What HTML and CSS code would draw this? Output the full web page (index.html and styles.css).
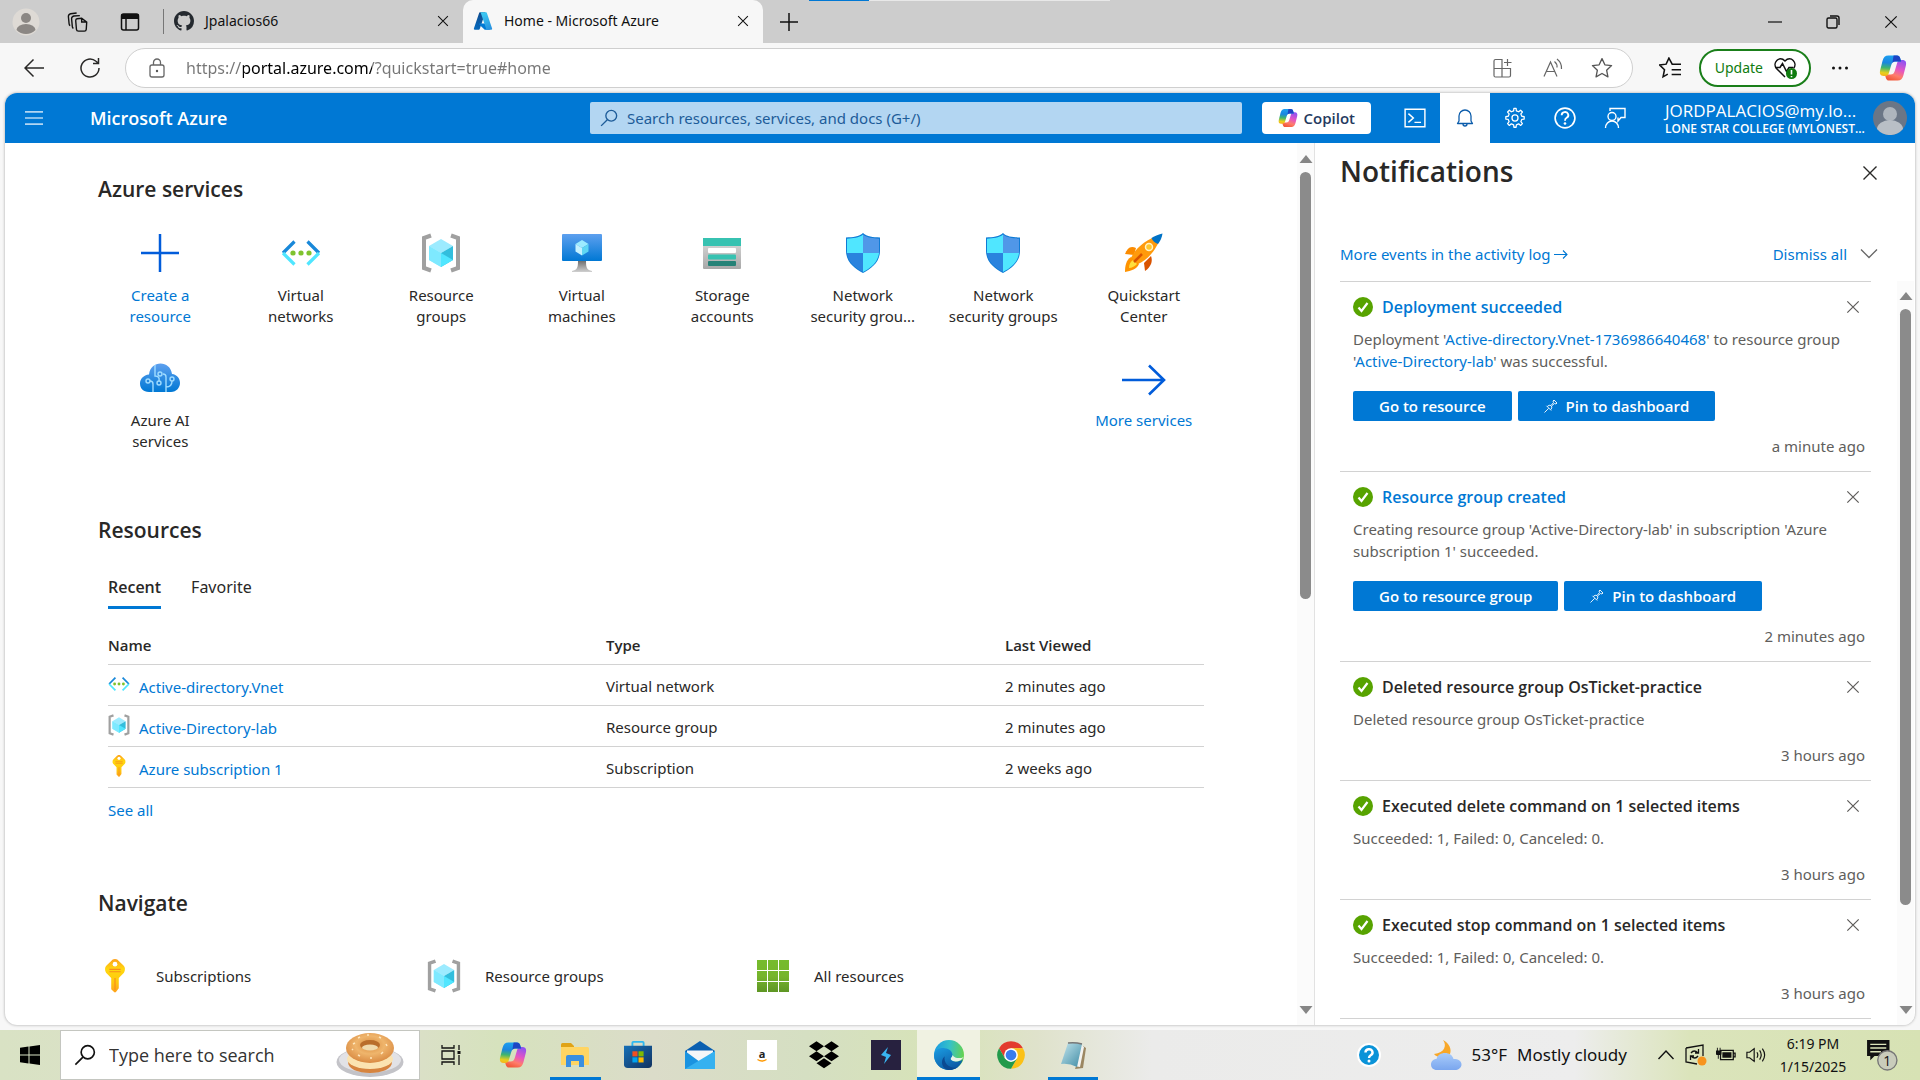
FILE: index.html
```html
<!DOCTYPE html>
<html lang="en">
<head>
<meta charset="utf-8">
<title>Home - Microsoft Azure</title>
<link rel="stylesheet" href="styles.css">
</head>
<body>
<svg class="sprite" aria-hidden="true">
  <defs>
    <linearGradient id="g-blue" x1="0" y1="0" x2="0" y2="1"><stop offset="0" stop-color="#5ea0ef"/><stop offset="1" stop-color="#0078d4"/></linearGradient>
    <linearGradient id="g-stand" x1="0" y1="0" x2="0" y2="1"><stop offset="0" stop-color="#707070"/><stop offset="1" stop-color="#d0d0d0"/></linearGradient>
    <linearGradient id="g-box" x1="0" y1="0" x2="0" y2="1"><stop offset="0" stop-color="#dcdcdc"/><stop offset="1" stop-color="#a8a8a8"/></linearGradient>
    <linearGradient id="g-key" x1="0" y1="0" x2="0" y2="1"><stop offset="0" stop-color="#fea11b"/><stop offset=".3" stop-color="#ffd70f"/><stop offset=".7" stop-color="#ffc80f"/><stop offset="1" stop-color="#fea11b"/></linearGradient>
    <linearGradient id="g-green" gradientUnits="userSpaceOnUse" x1="0" y1="0" x2="0" y2="32"><stop offset="0" stop-color="#76bc2d"/><stop offset=".5" stop-color="#76b52d"/><stop offset="1" stop-color="#5e9624"/></linearGradient>
    <linearGradient id="g-copa" x1=".3" y1="0" x2=".2" y2="1"><stop offset="0" stop-color="#1c9ff0"/><stop offset=".35" stop-color="#1a86e0"/><stop offset=".6" stop-color="#3fb56f"/><stop offset=".85" stop-color="#e8cf1e"/><stop offset="1" stop-color="#f7b21b"/></linearGradient>
    <linearGradient id="g-copb" x1=".2" y1="1" x2=".6" y2="0"><stop offset="0" stop-color="#8b52f4"/><stop offset=".45" stop-color="#e455c4"/><stop offset=".75" stop-color="#ff7d6b"/><stop offset="1" stop-color="#f25a3c"/></linearGradient>
    <linearGradient id="g-azl" x1=".7" y1="0" x2=".3" y2="1"><stop offset="0" stop-color="#114a8b"/><stop offset="1" stop-color="#0669bc"/></linearGradient>
    <linearGradient id="g-azr" x1=".3" y1="0" x2=".7" y2="1"><stop offset="0" stop-color="#3ccbf4"/><stop offset="1" stop-color="#2892df"/></linearGradient>
    <linearGradient id="g-edge" x1="0" y1=".4" x2="1" y2=".5"><stop offset="0" stop-color="#1b9de2"/><stop offset=".5" stop-color="#35c1c8"/><stop offset="1" stop-color="#66d34c"/></linearGradient>
    <linearGradient id="g-edgeb" x1="0" y1="0" x2=".6" y2="1"><stop offset="0" stop-color="#1b9de2"/><stop offset="1" stop-color="#0c59a4"/></linearGradient>
    <linearGradient id="g-cloud" x1="0" y1="0" x2="0" y2="1"><stop offset="0" stop-color="#a9ccfb"/><stop offset="1" stop-color="#7aa6ee"/></linearGradient>
    <linearGradient id="g-store" x1="0" y1="0" x2="1" y2="1"><stop offset="0" stop-color="#1670b8"/><stop offset="1" stop-color="#12325f"/></linearGradient>
    <linearGradient id="g-note" x1="0" y1="0" x2="1" y2="1"><stop offset="0" stop-color="#c5e6ee"/><stop offset="1" stop-color="#3f8ca5"/></linearGradient>
    <radialGradient id="g-bagel" cx=".5" cy=".4" r=".6"><stop offset="0" stop-color="#d98b3e"/><stop offset=".5" stop-color="#efb56c"/><stop offset="1" stop-color="#d98a42"/></radialGradient>
  </defs>

  <symbol id="i-x" viewBox="0 0 16 16"><path d="M1.500 1.500 14.500 14.500M14.500 1.500 1.500 14.500" fill="none" stroke="currentColor" stroke-width="1.400"/></symbol>
  <symbol id="i-person" viewBox="0 0 28 28"><circle cx="14" cy="14" r="13.500" fill="#dedad5"/><circle cx="14" cy="10" r="5" fill="#8b8784"/><path d="M4.500 22a9.500 6 0 0 1 19 0 13.500 13.500 0 0 1-19 0z" fill="#8b8784"/></symbol>
  <symbol id="i-spaces" viewBox="0 0 24 24"><g fill="none" stroke="currentColor" stroke-width="1.500"><path d="M11 8.500 16 8l5.500 4-.5 8q-.2 2-2 2h-6.500q-2 0-2.200-2L9.500 10.500q0-1.800 1.500-2zM16 8v4h5.500"/><path d="M7 19q-1-.5-1.200-2L5 8.500Q5 6 7.500 5.500L14 5M3.500 16q-1-.5-1.200-2L1.500 6Q1.500 3.500 4 3l6.500-.8"/></g></symbol>
  <symbol id="i-vtabs" viewBox="0 0 20 20"><rect x="1.500" y="2" width="17" height="16" rx="2" fill="none" stroke="currentColor" stroke-width="1.500"/><path d="M1.500 2h17v5h-17z" fill="currentColor"/><path d="M6 7v11" stroke="currentColor" stroke-width="1.500"/></symbol>
  <symbol id="i-github" viewBox="0 0 16 16"><path fill="#24292f" d="M8 0C3.580 0 0 3.580 0 8c0 3.540 2.290 6.530 5.470 7.590.4.070.55-.17.55-.38 0-.19-.01-.82-.01-1.490-2.010.37-2.530-.49-2.690-.94-.09-.23-.48-.94-.82-1.130-.28-.15-.68-.52-.01-.53.63-.01 1.080.58 1.230.82.72 1.210 1.870.87 2.330.66.07-.52.28-.87.51-1.070-1.780-.2-3.640-.89-3.640-3.950 0-.87.31-1.590.82-2.150-.08-.2-.36-1.020.08-2.120 0 0 .67-.21 2.200.82.64-.18 1.320-.27 2-.27s1.360.09 2 .27c1.530-1.040 2.200-.82 2.200-.82.44 1.100.16 1.920.08 2.120.51.56.82 1.270.82 2.150 0 3.070-1.870 3.750-3.650 3.950.29.25.54.73.54 1.480 0 1.070-.01 1.930-.01 2.200 0 .21.15.46.55.38A8.010 8.010 0 0 0 16 8c0-4.420-3.580-8-8-8z"/></symbol>
  <symbol id="i-azure" viewBox="0 0 96 96"><path fill="url(#g-azl)" d="M33.338 6.544h26.038l-27.030 80.087a4.152 4.152 0 0 1-3.933 2.824H8.149a4.145 4.145 0 0 1-3.928-5.470L29.404 9.368a4.152 4.152 0 0 1 3.934-2.825z"/><path fill="#0078d4" d="M71.175 60.261h-41.290a1.911 1.911 0 0 0-1.305 3.309l26.532 24.764a4.171 4.171 0 0 0 2.846 1.121h23.380z"/><path fill="url(#g-azr)" d="M66.595 9.364a4.145 4.145 0 0 0-3.928-2.820H33.648a4.146 4.146 0 0 1 3.928 2.820l25.184 74.620a4.146 4.146 0 0 1-3.928 5.472h29.020a4.146 4.146 0 0 0 3.927-5.472z"/></symbol>
  <symbol id="i-plus" viewBox="0 0 18 18"><path d="M9 0v18M0 9h18" stroke="currentColor" stroke-width="1.500"/></symbol>
  <symbol id="i-min" viewBox="0 0 14 14"><path d="M0 7h14" stroke="currentColor" stroke-width="1.200"/></symbol>
  <symbol id="i-restore" viewBox="0 0 14 14"><g fill="none" stroke="currentColor" stroke-width="1.400"><rect x="1" y="3" width="10" height="10" rx="1.500"/><path d="M4 1h7q2 0 2 2v7"/></g></symbol>
  <symbol id="i-back" viewBox="0 0 20 20"><path d="M20 10H1M9.500 1.500 1 10l8.500 8.500" fill="none" stroke="currentColor" stroke-width="1.500"/></symbol>
  <symbol id="i-refresh" viewBox="0 0 20 20"><path d="M19 10a9 9 0 1 1-3-6.700L18 5M18.500 0v5.500H13" fill="none" stroke="currentColor" stroke-width="1.500"/></symbol>
  <symbol id="i-lock" viewBox="0 0 20 20"><g fill="none" stroke="#666" stroke-width="1.300"><rect x="3" y="7" width="14" height="12" rx="2"/><path d="M6.500 7V4.500a3.500 3.500 0 0 1 7 0V7"/></g><circle cx="10" cy="13" r="1.200" fill="#555"/></symbol>
  <symbol id="i-apps" viewBox="0 0 20 20"><path d="M1 3q0-1.500 1.500-1.500H9V19H2.500Q1 19 1 17.500zM1 10.500h16.500V17.500q0 1.500-1.500 1.500H9M14.500 1v7M11 4.500h7.500" fill="none" stroke="#666" stroke-width="1.200"/></symbol>
  <symbol id="i-read" viewBox="0 0 20 20"><path d="M1 18.500 7.500 4 14 18.500M3.500 13.500h8M11.500 3.500q3 2.500 2.500 6M14 1q5 4 4.500 10" fill="none" stroke="#666" stroke-width="1.200"/></symbol>
  <symbol id="i-star" viewBox="0 0 20 20"><path d="m10 1.500 2.600 5.600 6.100.7-4.500 4.200 1.200 6.100L10 15l-5.400 3.100 1.200-6.100L1.300 7.800l6.100-.7z" fill="none" stroke="#555" stroke-width="1.200" stroke-linejoin="round"/></symbol>
  <symbol id="i-favs" viewBox="0 0 20 20"><path d="M13 6.500h-1L9 1 6.500 6.500l-6 .7 4.500 4.300-1.300 6.500L8 15.500M12.500 6.500H20M11.500 11.500H20M11.500 16H20" fill="none" stroke="#111" stroke-width="1.400"/></symbol>
  <symbol id="i-heart" viewBox="0 0 24 24"><path d="M12 21 3.500 12.500C-1 7 6-1 12 5c6-6 13 2 8.500 7.500M2 11.500h5l2.500-4 4 8 2.500-4h4" fill="none" stroke="#111" stroke-width="1.500"/><circle cx="18.500" cy="17.500" r="5.500" fill="#107c10"/><path d="M18.500 14v4.500M18.500 20v1.200" stroke="#fff" stroke-width="1.600"/></symbol>
  <symbol id="i-dots" viewBox="0 0 18 18"><g fill="#111"><circle cx="2.500" cy="9" r="1.500"/><circle cx="9" cy="9" r="1.500"/><circle cx="15.500" cy="9" r="1.500"/></g></symbol>
  <symbol id="i-copilot" viewBox="0 0 24 24"><path fill="url(#g-copb)" transform="rotate(180 12 12)" d="M8 1.200h7.500c1.500 0 2.200.9 2.600 2.200L19 6.500h-4.800c-2.100 0-3.100 1-3.700 3l-2.100 7c-.5 1.600-1.400 2.300-2.900 2.300H4c-3 0-3.700-2-3-4.800L3 6C3.900 2.700 5.300 1.200 8 1.200z"/><path fill="url(#g-copa)" d="M8 1.200h7.500c1.500 0 2.200.9 2.600 2.200L19 6.500h-4.800c-2.100 0-3.100 1-3.700 3l-2.100 7c-.5 1.600-1.400 2.300-2.900 2.300H4c-3 0-3.700-2-3-4.800L3 6C3.900 2.700 5.300 1.200 8 1.200z"/><path fill="#1d44c4" d="M12.500 1.200h3c1.500 0 2.200.9 2.600 2.200L19 6.500h-4.800c-1.200 0-2.100.3-2.700 1z"/></symbol>

  <symbol id="i-menu" viewBox="0 0 16 16"><path d="M0 2.500h16M0 8h16M0 13.500h16" stroke="#b3d6f2" stroke-width="1.500"/></symbol>
  <symbol id="i-search" viewBox="0 0 16 16"><path d="M1 15 6.500 9.500" stroke="currentColor" stroke-width="1.200"/><circle cx="10" cy="6" r="4.800" fill="none" stroke="currentColor" stroke-width="1.200"/></symbol>
  <symbol id="i-shell" viewBox="0 0 20 20"><path d="M1 2h18v16H1zM4 6l4.500 4L4 14M9.500 14h6" fill="none" stroke="currentColor" stroke-width="1.300"/></symbol>
  <symbol id="i-bell" viewBox="0 0 20 20"><path d="M2.500 15.500h15L16 13V8A6 6 0 0 0 4 8v5zM8 16a2 2 0 0 0 4 0" fill="none" stroke="currentColor" stroke-width="1.300" stroke-linejoin="round"/></symbol>
  <symbol id="i-gear" viewBox="0 0 24 24"><g fill="none" stroke="currentColor" stroke-width="1.400"><circle cx="12" cy="12" r="3.300"/><path stroke-linejoin="round" d="M10.500 4.200 10.800 1.500h2.400l.3 2.700 2.500 1 2.100-1.700 2 2-1.700 2.100 1 2.500 2.600.3v2.800l-2.600.3-1 2.500 1.700 2.100-2 2-2.100-1.700-2.500 1-.3 2.700h-2.400l-.3-2.700-2.500-1-2.100 1.700-2-2L5.600 16l-1-2.500-2.600-.3v-2.800l2.600-.3 1-2.500-1.700-2.100 2-2L8 5.200z"/></g></symbol>
  <symbol id="i-help" viewBox="0 0 20 20"><g fill="none" stroke="currentColor"><circle cx="10" cy="10" r="9" stroke-width="1.500"/><path d="M7 7.500a3 2.800 0 1 1 4.500 2.300Q10 10.600 10 12.500" stroke-width="1.700"/></g><circle cx="10" cy="15" r="1.200" fill="currentColor"/></symbol>
  <symbol id="i-feedback" viewBox="0 0 22 22"><g fill="none" stroke="currentColor" stroke-width="1.400"><path d="M6 4V1.500h15v9h-4l-3 3.500v-3.500"/><circle cx="8" cy="9.500" r="4"/><path d="M1.500 21a6.500 7 0 0 1 13 0"/></g></symbol>
  <symbol id="i-user" viewBox="0 0 34 34"><circle cx="17" cy="17" r="17" fill="#6b7686"/><circle cx="17" cy="13" r="7" fill="#aeb5bd"/><path d="M4 28a13 9 0 0 1 26 0 17 17 0 0 1-26 0z" fill="#b9bfc6"/></symbol>

  <symbol id="i-create" viewBox="0 0 40 40"><path d="M20 1v38M1 20h38" stroke="#015cda" stroke-width="2.500"/></symbol>
  <symbol id="i-vnet" viewBox="0 0 40 40"><path d="M13.500 8.500 2 20M26.500 8.500 38 20" fill="none" stroke="#1988d9" stroke-width="3.200"/><path d="M2 20l11.500 11.500M38 20 26.500 31.500" stroke="#50e6ff" stroke-width="3.200"/><g fill="#7fc32e"><circle cx="12" cy="20" r="2.600"/><circle cx="20" cy="20" r="2.600"/><circle cx="28" cy="20" r="2.600"/></g></symbol>
  <symbol id="i-rg" viewBox="0 0 40 40"><path d="M10 2.500 3 5v30l7 2.500M30 2.500 37 5v30l-7 2.500" fill="none" stroke="#a0a0a0" stroke-width="4"/><path fill="#9cebff" d="m20 6 12 7-12 7-12-7z"/><path fill="#50e6ff" d="M8 13l12 7v14L8 27z"/><path fill="#32bedd" d="M32 13 20 20v14l12-7z"/><path fill="#9cebff" d="M8 27l12-7v14zM8 13l12 7L8 27z" opacity=".6"/><path fill="#50e6ff" d="m20 20 12 7-12 7z"/></symbol>
  <symbol id="i-vm" viewBox="0 0 40 40"><rect y="1" width="40" height="27" rx="1" fill="url(#g-blue)"/><path fill="#9cebff" d="m20 7 6.500 4-6.500 4-6.500-4z"/><path fill="#c3f1ff" d="M13.500 11l6.500 4v7.500l-6.500-4z"/><path fill="#5fd6f3" d="M26.500 11 20 15v7.500l6.500-4z"/><path fill="url(#g-stand)" d="M16 28h8c0 7 1 9 6 10v1H10v-1c5-1 6-3 6-10z"/></symbol>
  <symbol id="i-storage" viewBox="0 0 40 40"><rect x="1" y="5" width="38" height="31" rx="1" fill="url(#g-box)"/><path fill="#37c2b1" d="M1 5h38v8H1z"/><rect x="6" y="15" width="28" height="5" rx="1" fill="#fff"/><rect x="6" y="21.500" width="28" height="5" rx="1" fill="#37c2b1"/><rect x="6" y="28" width="28" height="5" rx="1" fill="#258277"/></symbol>
  <symbol id="i-shield" viewBox="0 0 40 40"><path fill="#0f7bd5" d="M20 0c4 4 10 4 17 4.500V18c0 11-9 18-17 22C12 36 3 29 3 18V4.500C10 4 16 4 20 0z"/><path fill="#50e6ff" d="M20 1.500V20H4V5.700C10 5 16 5 20 1.500z"/><path fill="#5097e8" d="M20 1.500V20h16V5.700C30 5 24 5 20 1.500z"/><path fill="#50e6ff" d="M20 20h16c-1 9-8 15-16 19z"/><path fill="#2a83de" d="M20 20H4c1 9 8 15 16 19z"/></symbol>
  <symbol id="i-rocket" viewBox="0 0 40 40"><path fill="#fb8b00" d="M12 15c-6-3-9 1-11 6l9 1z"/><path fill="#d95300" d="M27 23c2 5 0 11-6 15l-1-8z"/><path fill="#ff9a0c" d="M37 2C24 5 12 14 7 25l7 6C24 27 34 15 37 2z"/><path fill="#0072c6" d="M38.500.500C35 1 31 3 27.500 5c1 3 3.500 5 6.500 6 2.500-3 4-7 4.500-10.500z"/><circle cx="25" cy="14" r="3.500" fill="#ffc72e" stroke="#fff3c4" stroke-width="1.500"/><path fill="#ff9300" d="M7 24c-5 3-6 9-6 15 6-1 12-3 14-8z"/><path fill="#ffdf3d" d="M9 27c-3 2-4 5-4 8 3 0 6-2 8-4z"/><path d="M10 29 18 21" stroke="#d95300" stroke-width="2.500"/></symbol>
  <symbol id="i-ai" viewBox="0 0 40 40"><path fill="url(#g-blue)" d="M9 34C3 34 0 30 0 25.500S3.500 17 9 16.500C10 9 15 5.500 20.500 5.500S31 9 32 16c5 .5 8 4.500 8 9S36.500 34 31 34z"/><g fill="none" stroke="#9fdcff" stroke-width="1.400"><circle cx="8" cy="23" r="2"/><path d="M10 23q3 0 3 3v8M15 7v11q5 0 4 5M26 34V19q0-3-3-3M26 29q6 0 6-6"/><circle cx="20" cy="16" r="2"/><circle cx="19" cy="25" r="2"/><circle cx="32" cy="21" r="2"/></g></symbol>
  <symbol id="i-more" viewBox="0 0 46 32"><path d="M1 16h42M28 1.500 43 16 28 30.500" fill="none" stroke="#015cda" stroke-width="2.600"/></symbol>
  <symbol id="i-key" viewBox="0 0 24 36"><path fill="url(#g-key)" d="M12 0c2 0 3 1 4 2l5 5c2 2 2 5 .5 7.500L16 20v11l-3 4q-1 1-2 0l-3-3V20L2.500 14.500C1 12 1 9 3 7l5-5c1-1 2-2 4-2z"/><circle cx="12" cy="5.500" r="2.500" fill="#fff"/><path d="M6 11h12M6 13.500h12" stroke="#f78d1e" stroke-width="1.200"/><path d="M12 20v13" stroke="#f78d1e" stroke-width="1.200"/></symbol>
  <symbol id="i-grid" viewBox="0 0 32 32"><path fill="url(#g-green)" d="M0 0h10v10H0zM11 0h10v10H11zM22 0h10v10H22zM0 11h10v10H0zM11 11h10v10H11zM22 11h10v10H22zM0 22h10v10H0zM11 22h10v10H11zM22 22h10v10H22z"/></symbol>
  <symbol id="i-check" viewBox="0 0 20 20"><circle cx="10" cy="10" r="10" fill="#57a300"/><path d="m5.500 10.500 3 3.500 6-8" fill="none" stroke="#fff" stroke-width="2.200"/></symbol>
  <symbol id="i-pin" viewBox="0 0 14 14"><path d="M.5 13.500l4.200-4.200M2.500 6.800l4.700 4.700M3.300 7.500Q5 5.500 7 6.500L9.500 3.500 9 2l1-1 3 3-1 1-1.500-.5-3 2.500q1 2-.8 3.700" fill="none" stroke="#fff" stroke-width=".9"/></symbol>
  <symbol id="i-arrow" viewBox="0 0 14 14"><path d="M0 7.500h13M9 3.500l4 4-4 4" fill="none" stroke="currentColor" stroke-width="1.100"/></symbol>
  <symbol id="i-chevron" viewBox="0 0 18 18"><path d="m1 4.500 8 8 8-8" fill="none" stroke="#666" stroke-width="1.300"/></symbol>
  <symbol id="i-up" viewBox="0 0 14 14"><path fill="#868686" d="M7 3l6.500 8H.500z"/></symbol>
  <symbol id="i-down" viewBox="0 0 14 14"><path fill="#868686" d="M7 11 .500 3h13z"/></symbol>

  <symbol id="i-win" viewBox="0 0 20 20"><path fill="#000" d="M0 2.800 8.500 1.600V9.500H0zM9.500 1.500 20 0v9.500H9.500zM0 10.500h8.500v8L0 17.300zM9.500 10.500H20V20L9.500 18.600z"/></symbol>
  <symbol id="i-bagel" viewBox="0 0 68 46"><ellipse cx="34" cy="30" rx="33.500" ry="15" fill="#c3c3c8"/><ellipse cx="34" cy="28" rx="31" ry="12.500" fill="#e2e2e6"/><path fill="#d6843f" d="M12 25h44v5c0 7-10 11-22 11S12 37 12 30z"/><ellipse cx="34" cy="27" rx="23" ry="10" fill="#fbe3b0"/><ellipse cx="34" cy="16" rx="24" ry="15" fill="url(#g-bagel)"/><ellipse cx="34" cy="13" rx="10" ry="5" fill="#b96d2b"/><ellipse cx="34" cy="15.500" rx="8" ry="3" fill="#f0d9ac"/><path d="M17 12l2-1M22 6l2-1M31 3h2M43 5l2 1M50 12l1 2M47 20l-2 2M36 26h-2M24 24l-2-1M17 18l-1-1" stroke="#ffe7bd" stroke-width="1.500"/></symbol>
  <symbol id="i-task" viewBox="0 0 20 20"><path d="M1 0v3h12V0M1 20v-3h12v3M1 6h12v8H1zM18 0v5M18 10v10" fill="none" stroke="#111" stroke-width="1.300"/><path fill="#111" d="M16.500 6h3v3h-3z"/></symbol>
  <symbol id="i-folder" viewBox="0 0 28 24"><path fill="#e0a316" d="M0 1.500Q0 0 1.500 0H10l3 3v4H0z"/><path fill="#ffd562" d="M0 4h26.500Q28 4 28 5.500V22H0z"/><path fill="#3a8fe0" d="M5 24V14q0-2 2-2h14q2 0 2 2v10h-5v-6h-8v6z"/></symbol>
  <symbol id="i-store" viewBox="0 0 30 30"><path d="M9 6V2q0-1 1-1h10q1 0 1 1v4" fill="none" stroke="#2eb8f0" stroke-width="2"/><path fill="url(#g-store)" d="M0 5h30v20q0 4-4 4H4q-4 0-4-4z"/><path fill="#f25022" d="M9 11h5.500v5.500H9z"/><path fill="#7fba00" d="M15.500 11H21v5.500h-5.500z"/><path fill="#00a4ef" d="M9 17.500h5.500V23H9z"/><path fill="#ffb900" d="M15.500 17.500H21V23h-5.500z"/></symbol>
  <symbol id="i-mail" viewBox="0 0 30 28"><path fill="#0a5fb0" d="M0 10 15 0l15 10v6H0z"/><path fill="#f4f6f8" d="M2 9.500h26V16L15 21 2 16z"/><path fill="#1a93e0" d="M0 10l15 11L30 10v18H0z"/><path fill="#35b1f0" d="M0 28 30 10v18z"/></symbol>
  <symbol id="i-dropbox" viewBox="0 0 24 22"><path d="m6 0 6 4-6 4-6-4zM18 0l6 4-6 4-6-4zM6 8l6 4-6 4-6-4zM18 8l6 4-6 4-6-4zM12 13.500l6 4-6 4-6-4z"/></symbol>
  <symbol id="i-bolt" viewBox="0 0 30 30"><path fill="#27213f" d="M0 0h30v30H0z"/><path fill="#39b4f0" d="m17 7-7 8 5 2-2 7 7-9-5-2z"/></symbol>
  <symbol id="i-edge" viewBox="0 0 24 24"><circle cx="12" cy="12" r="12" fill="url(#g-edge)"/><path fill="url(#g-edgeb)" d="M0 12c.5-4 4-6 8.500-5.500 4 .4 6.300 2.800 6.300 5.500 0 1.200-.8 1.800-1.300 2.600-.5 1 .8 2 2.500 2.400 2.300.5 4.700 0 7-1.500C21.500 20.500 17.500 24 12 24 5 24 0 18.500 0 12z"/><path fill="#e9f2e6" d="M14.800 12c0 1.200-.8 1.800-1.300 2.600-.5 1 .8 2 2.500 2.400 2.700.5 6-.5 7.700-3.500-2.500 1.500-7 1.500-8.900-1.500z"/><path fill="#0b4a92" d="M8.500 13c-1 6 4 10 10 9-2 1.300-4.500 2-7 2-5-1-7-7-3-11z"/></symbol>
  <symbol id="i-chrome" viewBox="0 0 24 24"><path fill="#e33b2e" d="M2.470 6.500A11 11 0 0 1 21.530 6.500H12l-4.760 8.250z"/><path fill="#fbc116" d="M21.530 6.500A11 11 0 0 1 12 23l4.760-8.250L12 6.500z"/><path fill="#229a4b" d="M12 23A11 11 0 0 1 2.470 6.500l4.770 8.250h9.520z"/><circle cx="12" cy="12" r="5.500" fill="#fff"/><circle cx="12" cy="12" r="4.300" fill="#3a7cec"/></symbol>
  <symbol id="i-notepad" viewBox="0 0 28 28"><path fill="#9b8762" d="M24 5l3 2-3 20-8 1z"/><path fill="#f3f3f0" d="M21 3l4 3-4 20-6-1z"/><path fill="url(#g-note)" d="M9 2q7-1 14 1l-5 23Q10 22 2 23z"/><path d="M9 2q7-1 14 1" fill="none" stroke="#777" stroke-width="1.500"/></symbol>
  <symbol id="i-qhelp" viewBox="0 0 24 24"><circle cx="12" cy="12" r="11" fill="#0a93d8" stroke="#fff" stroke-width="2"/><path d="M8.500 9.500a3.500 3.200 0 1 1 5.200 2.700Q12 13.300 12 15" fill="none" stroke="#fff" stroke-width="2.400"/><circle cx="12" cy="18" r="1.500" fill="#fff"/></symbol>
  <symbol id="i-weather" viewBox="0 0 32 30"><path fill="#f8a728" d="M13 0c4 5 2 13-9 14 3 4 12 5 16 0 2-5-1-11-7-14z"/><path fill="url(#g-cloud)" d="M7 30c-4 0-6-2.500-6-5.500S3 19 6.500 19c1-4 4.500-6 8.500-6s7.500 2 8.500 6c5 0 8 2 8 5.500S28 30 25 30z"/></symbol>
  <symbol id="i-caret" viewBox="0 0 18 18"><path d="m1.500 13 7.500-8 7.500 8" fill="none" stroke="#111" stroke-width="1.400"/></symbol>
  <symbol id="i-sync" viewBox="0 0 22 22"><path d="M1 4l17-3v11M1 4v14l11 2M6 9q3-4 7 0M13.500 5v4H10M13 12q-3 4-7 0M5.500 16v-4H9" fill="none" stroke="#111" stroke-width="1.300"/><circle cx="17" cy="17" r="4.500" fill="#f7941d"/></symbol>
  <symbol id="i-battery" viewBox="0 0 22 16"><path d="M5 3h14v10H5zM19 6h2v4h-2" fill="none" stroke="#111" stroke-width="1.400"/><path d="M7 5h10v6H7zM0 3h6v4q0 1-1 1H3v4H2V8H1Q0 8 0 7zM1 0h1v3H1zM4 0h1v3H4z" fill="#111"/></symbol>
  <symbol id="i-volume" viewBox="0 0 22 18"><path d="M1 6v6h3l5 4V2L4 6zM12 6q2 3 0 6M15 4q3.500 5 0 10M18 2q5 7 0 14" fill="none" stroke="#111" stroke-width="1.300"/></symbol>
</svg>

<div class="browser">
  <header class="tabstrip">
    <div class="load" aria-hidden="true"></div>
    <button class="icon-btn tab-tool" aria-label="Profile"><svg class="s28"><use href="#i-person"/></svg></button>
    <button class="icon-btn tab-tool" aria-label="Workspaces"><svg class="s22"><use href="#i-spaces"/></svg></button>
    <button class="icon-btn tab-tool" aria-label="Tab actions"><svg class="s20"><use href="#i-vtabs"/></svg></button>
    <div class="tab first"><svg class="s20"><use href="#i-github"/></svg><span>Jpalacios66</span><button class="icon-btn" aria-label="Close tab"><svg class="s12"><use href="#i-x"/></svg></button></div>
    <div class="tab active"><svg class="s20"><use href="#i-azure"/></svg><span>Home - Microsoft Azure</span><button class="icon-btn" aria-label="Close tab"><svg class="s12"><use href="#i-x"/></svg></button></div>
    <button class="icon-btn new-tab" aria-label="New tab"><svg class="s18"><use href="#i-plus"/></svg></button>
    <div class="window-btns">
      <button class="icon-btn" aria-label="Minimize"><svg class="s14"><use href="#i-min"/></svg></button>
      <button class="icon-btn" aria-label="Restore"><svg class="s14"><use href="#i-restore"/></svg></button>
      <button class="icon-btn" aria-label="Close"><svg class="s14"><use href="#i-x"/></svg></button>
    </div>
  </header>

  <div class="toolbar">
    <button class="icon-btn nav-btn" aria-label="Back"><svg class="s20"><use href="#i-back"/></svg></button>
    <button class="icon-btn nav-btn" aria-label="Refresh"><svg class="s20"><use href="#i-refresh"/></svg></button>
    <div class="address">
      <svg class="s20"><use href="#i-lock"/></svg>
      <input class="url" type="text" aria-label="Address" value="https://portal.azure.com/?quickstart=true#home">
      <button class="icon-btn" aria-label="Apps"><svg class="s20"><use href="#i-apps"/></svg></button>
      <button class="icon-btn" aria-label="Read aloud"><svg class="s20"><use href="#i-read"/></svg></button>
      <button class="icon-btn" aria-label="Add to favorites"><svg class="s22"><use href="#i-star"/></svg></button>
    </div>
    <button class="icon-btn favs" aria-label="Favorites"><svg class="s22"><use href="#i-favs"/></svg></button>
    <button class="update">Update <svg class="s24"><use href="#i-heart"/></svg></button>
    <button class="icon-btn more" aria-label="Settings and more"><svg class="s18"><use href="#i-dots"/></svg></button>
    <button class="icon-btn" aria-label="Copilot"><svg class="s28"><use href="#i-copilot"/></svg></button>
  </div>

  <div class="portal">
    <header class="topbar">
      <button class="icon-btn burger" aria-label="Show portal menu"><svg class="s18"><use href="#i-menu"/></svg></button>
      <a class="brand" href="#">Microsoft Azure</a>
      <label class="search"><svg class="s18"><use href="#i-search"/></svg><input type="text" aria-label="Search" placeholder="Search resources, services, and docs (G+/)"></label>
      <button class="copilot"><svg class="s20"><use href="#i-copilot"/></svg>Copilot</button>
      <div class="top-icons">
        <button class="icon-btn" aria-label="Cloud Shell"><svg class="s22"><use href="#i-shell"/></svg></button>
        <button class="icon-btn on" aria-label="Notifications"><svg class="s20"><use href="#i-bell"/></svg></button>
        <button class="icon-btn" aria-label="Settings"><svg class="s22"><use href="#i-gear"/></svg></button>
        <button class="icon-btn" aria-label="Help"><svg class="s22"><use href="#i-help"/></svg></button>
        <button class="icon-btn" aria-label="Feedback"><svg class="s22"><use href="#i-feedback"/></svg></button>
      </div>
      <button class="account">
        <span class="who"><span class="mail">JORDPALACIOS@my.lo...</span><span class="org">LONE STAR COLLEGE (MYLONEST...</span></span>
        <svg class="s34"><use href="#i-user"/></svg>
      </button>
    </header>

    <div class="split">
      <main class="home">
        <div class="content">
          <section class="services">
            <h2>Azure services</h2>
            <div class="tiles">
              <a class="tile link" href="#"><svg class="s40"><use href="#i-create"/></svg>Create a<br>resource</a>
              <a class="tile" href="#"><svg class="s40"><use href="#i-vnet"/></svg>Virtual<br>networks</a>
              <a class="tile" href="#"><svg class="s40"><use href="#i-rg"/></svg>Resource<br>groups</a>
              <a class="tile" href="#"><svg class="s40"><use href="#i-vm"/></svg>Virtual<br>machines</a>
              <a class="tile" href="#"><svg class="s40"><use href="#i-storage"/></svg>Storage<br>accounts</a>
              <a class="tile" href="#"><svg class="s40"><use href="#i-shield"/></svg>Network<br>security grou...</a>
              <a class="tile" href="#"><svg class="s40"><use href="#i-shield"/></svg>Network<br>security groups</a>
              <a class="tile" href="#"><svg class="s40"><use href="#i-rocket"/></svg>Quickstart<br>Center</a>
              <a class="tile" href="#"><svg class="s40"><use href="#i-ai"/></svg>Azure AI<br>services</a>
              <a class="tile link last" href="#"><svg class="arrow"><use href="#i-more"/></svg>More services</a>
            </div>
          </section>

          <section class="resources">
            <h2>Resources</h2>
            <div class="tabs" role="tablist">
              <button role="tab" aria-selected="true">Recent</button>
              <button role="tab" aria-selected="false">Favorite</button>
            </div>
            <table>
              <thead><tr><th class="c-name">Name</th><th class="c-type">Type</th><th>Last Viewed</th></tr></thead>
              <tbody>
                <tr><td><a class="res" href="#"><svg class="s22"><use href="#i-vnet"/></svg>Active-directory.Vnet</a></td><td>Virtual network</td><td>2 minutes ago</td></tr>
                <tr><td><a class="res" href="#"><svg class="s22"><use href="#i-rg"/></svg>Active-Directory-lab</a></td><td>Resource group</td><td>2 minutes ago</td></tr>
                <tr><td><a class="res" href="#"><svg class="s22"><use href="#i-key"/></svg>Azure subscription 1</a></td><td>Subscription</td><td>2 weeks ago</td></tr>
              </tbody>
            </table>
            <a class="see-all" href="#">See all</a>
          </section>

          <section class="navigate">
            <h2>Navigate</h2>
            <div class="nav-row">
              <a href="#"><svg class="s34"><use href="#i-key"/></svg>Subscriptions</a>
              <a href="#"><svg class="s34"><use href="#i-rg"/></svg>Resource groups</a>
              <a href="#"><svg class="s34 grid"><use href="#i-grid"/></svg>All resources</a>
            </div>
          </section>
        </div>
        <div class="scroll home-scroll" aria-hidden="true"><svg class="s14"><use href="#i-up"/></svg><div class="track"><div class="thumb"></div></div><svg class="s14"><use href="#i-down"/></svg></div>
      </main>

      <aside class="panel">
        <div class="panel-head"><h1>Notifications</h1><button class="icon-btn" aria-label="Close"><svg class="s16"><use href="#i-x"/></svg></button></div>
        <div class="panel-links"><a href="#">More events in the activity log<svg class="s14"><use href="#i-arrow"/></svg></a><button class="dismiss">Dismiss all<svg class="s18"><use href="#i-chevron"/></svg></button></div>
        <div class="panel-body">
          <div class="notes">
            <article class="note">
              <div class="note-head"><svg class="s20"><use href="#i-check"/></svg><h3><a href="#">Deployment succeeded</a></h3><button class="icon-btn" aria-label="Dismiss"><svg class="s14"><use href="#i-x"/></svg></button></div>
              <p>Deployment '<a href="#">Active-directory.Vnet-1736986640468</a>' to resource group<br>'<a href="#">Active-Directory-lab</a>' was successful.</p>
              <div class="actions"><button>Go to resource</button><button class="pin"><svg class="s14"><use href="#i-pin"/></svg>Pin to dashboard</button></div>
              <time>a minute ago</time>
            </article>
            <article class="note">
              <div class="note-head"><svg class="s20"><use href="#i-check"/></svg><h3><a href="#">Resource group created</a></h3><button class="icon-btn" aria-label="Dismiss"><svg class="s14"><use href="#i-x"/></svg></button></div>
              <p>Creating resource group 'Active-Directory-lab' in subscription 'Azure<br>subscription 1' succeeded.</p>
              <div class="actions"><button>Go to resource group</button><button class="pin"><svg class="s14"><use href="#i-pin"/></svg>Pin to dashboard</button></div>
              <time>2 minutes ago</time>
            </article>
            <article class="note">
              <div class="note-head"><svg class="s20"><use href="#i-check"/></svg><h3>Deleted resource group OsTicket-practice</h3><button class="icon-btn" aria-label="Dismiss"><svg class="s14"><use href="#i-x"/></svg></button></div>
              <p>Deleted resource group OsTicket-practice</p>
              <time>3 hours ago</time>
            </article>
            <article class="note">
              <div class="note-head"><svg class="s20"><use href="#i-check"/></svg><h3>Executed delete command on 1 selected items</h3><button class="icon-btn" aria-label="Dismiss"><svg class="s14"><use href="#i-x"/></svg></button></div>
              <p>Succeeded: 1, Failed: 0, Canceled: 0.</p>
              <time>3 hours ago</time>
            </article>
            <article class="note">
              <div class="note-head"><svg class="s20"><use href="#i-check"/></svg><h3>Executed stop command on 1 selected items</h3><button class="icon-btn" aria-label="Dismiss"><svg class="s14"><use href="#i-x"/></svg></button></div>
              <p>Succeeded: 1, Failed: 0, Canceled: 0.</p>
              <time>3 hours ago</time>
            </article>
          </div>
          <div class="scroll panel-scroll" aria-hidden="true"><svg class="s14"><use href="#i-up"/></svg><div class="track"><div class="thumb"></div></div><svg class="s14"><use href="#i-down"/></svg></div>
        </div>
      </aside>
    </div>
  </div>
</div>

<footer class="taskbar">
  <button class="icon-btn start" aria-label="Start"><svg class="s20"><use href="#i-win"/></svg></button>
  <label class="win-search"><svg class="s22"><use href="#i-search"/></svg><input type="text" aria-label="Windows search" placeholder="Type here to search"><svg class="bagel"><use href="#i-bagel"/></svg></label>
  <div class="apps">
    <button class="icon-btn" aria-label="Task view"><svg class="s20"><use href="#i-task"/></svg></button>
    <button class="icon-btn" aria-label="Copilot"><svg class="s28"><use href="#i-copilot"/></svg></button>
    <button class="icon-btn running" aria-label="File Explorer"><svg class="s28"><use href="#i-folder"/></svg></button>
    <button class="icon-btn" aria-label="Microsoft Store"><svg class="s28"><use href="#i-store"/></svg></button>
    <button class="icon-btn" aria-label="Mail"><svg class="s30"><use href="#i-mail"/></svg></button>
    <button class="icon-btn" aria-label="Amazon"><svg class="s30" viewBox="0 0 30 30"><path fill="#fff" d="M0 0h30v30H0z"/><text class="amazon-a" x="15" y="18" text-anchor="middle">a</text><path d="M10.500 19.500q4.500 3 9 0" fill="none" stroke="#f90" stroke-width="1.300"/></svg></button>
    <button class="icon-btn" aria-label="Dropbox"><svg class="s30"><use href="#i-dropbox"/></svg></button>
    <button class="icon-btn" aria-label="Bolt"><svg class="s30"><use href="#i-bolt"/></svg></button>
    <button class="icon-btn focused" aria-label="Edge"><svg class="s30"><use href="#i-edge"/></svg></button>
    <button class="icon-btn" aria-label="Chrome"><svg class="s30"><use href="#i-chrome"/></svg></button>
    <button class="icon-btn running" aria-label="Notepad"><svg class="s28"><use href="#i-notepad"/></svg></button>
  </div>
  <div class="tray">
    <button class="icon-btn tray-help" aria-label="Help"><svg class="s24"><use href="#i-qhelp"/></svg></button>
    <button class="weather"><svg class="s32"><use href="#i-weather"/></svg><span>53°F</span><span>Mostly cloudy</span></button>
    <button class="icon-btn" aria-label="Show hidden icons"><svg class="s18"><use href="#i-caret"/></svg></button>
    <button class="icon-btn" aria-label="Sync"><svg class="s22"><use href="#i-sync"/></svg></button>
    <button class="icon-btn" aria-label="Battery"><svg class="s20"><use href="#i-battery"/></svg></button>
    <button class="icon-btn" aria-label="Volume"><svg class="s20"><use href="#i-volume"/></svg></button>
    <button class="clock"><span>6:19 PM</span><span>1/15/2025</span></button>
    <button class="icon-btn action" aria-label="Action center"><svg class="s32" viewBox="0 0 30 30"><path fill="#111" d="M1 1h21v15H8l-4 4v-4H1z"/><path d="M4 5h15M4 8.500h15M4 12h10" stroke="#dbe3b9" stroke-width="1.300"/><circle cx="20" cy="20" r="9" fill="#c9ccbb" stroke="#777" stroke-width="1.300"/><text class="badge" x="20" y="25" text-anchor="middle">1</text></svg></button>
  </div>
</footer>
</body>
</html>
```
FILE: styles.css
```css
*, *::before, *::after { box-sizing: border-box; }

body {
  margin: 0;
  height: 100vh;
  display: flex;
  flex-direction: column;
  overflow: hidden;
  background: #f7f7f7;
  color: #292827;
  font: 15px/20px "Noto Sans", "Open Sans", sans-serif;
}

h1, h2, h3, p { margin: 0; }
a { color: inherit; text-decoration: none; }
button, input { font: inherit; color: inherit; border: 0; padding: 0; margin: 0; background: none; }
input { outline: 0; min-width: 0; }
button { white-space: nowrap; }
svg { display: block; flex: none; }
.sprite { position: absolute; width: 0; height: 0; }

/* Semibold text */
h1, h2, h3, th, .brand, .copilot, .org, .actions button, .tabs [aria-selected="true"] { font-family: "Open Sans", sans-serif; font-weight: 600; }

.s12 { width: 12px; height: 12px; }
.s14 { width: 14px; height: 14px; }
.s16 { width: 16px; height: 16px; }
.s18 { width: 18px; height: 18px; }
.s20 { width: 20px; height: 20px; }
.s22 { width: 22px; height: 22px; }
.s24 { width: 24px; height: 24px; }
.s28 { width: 28px; height: 28px; }
.s30 { width: 30px; height: 30px; }
.s32 { width: 32px; height: 32px; }
.s34 { width: 34px; height: 34px; }
.s40 { width: 40px; height: 40px; }

.icon-btn { display: flex; align-items: center; justify-content: center; flex: none; }

.browser { flex: 1; min-height: 0; display: flex; flex-direction: column; padding-bottom: 5px; }

/* Tab strip */
.tabstrip { position: relative; flex: none; display: flex; height: 43px; background: #cdcdcd; color: #111; font-size: 14px; }
.load { position: absolute; top: 0; left: 809px; width: 301px; height: 1px; background: linear-gradient(90deg, #0078d4 60px, #e8e8e8 60px); }
.tab-tool { width: 52px; }
.tab { display: flex; align-items: center; gap: 11px; width: 300px; padding: 0 14px 1px 10px; }
.tab span { flex: 1; }
.tab.first { margin-left: 7px; border-left: 1px solid #777; border-image: linear-gradient(transparent 22%, #777 22%, #777 78%, transparent 78%) 1; }
.tab.active { background: #f7f7f7; border-radius: 10px 10px 0 0; }
.new-tab { width: 52px; }
.window-btns { display: flex; margin-left: auto; }
.window-btns .icon-btn { width: 58px; }

/* Toolbar */
.toolbar { flex: none; display: flex; align-items: center; height: 50px; padding: 0 13px 0 6px; }
.nav-btn { width: 56px; }
.address { flex: 1; display: flex; align-items: center; height: 40px; margin: 0 22px 0 7px; padding: 0 18px 0 21px; background: #fff; border: 1px solid #cfcfcf; border-radius: 20px; }
.url {
  flex: 1;
  margin-left: 19px;
  font-size: 16px;
  line-height: 24px;
  background: linear-gradient(90deg, #767676 57px, #000 57px, #000 186px, #767676 186px);
  -webkit-background-clip: text;
  background-clip: text;
  -webkit-text-fill-color: transparent;
}
.address .icon-btn { width: 50px; }
.address .icon-btn:last-child { width: 24px; margin-left: 12px; }
.favs { width: 30px; }
.update { display: flex; align-items: center; gap: 10px; height: 38px; margin-left: 14px; padding: 0 12px 0 14px; border: 2px solid #1a7f1a; border-radius: 19px; background: #fff; color: #107c10; font-size: 14px; }
.more { width: 58px; margin-right: 10px; }

/* Portal */
.portal { flex: 1; min-height: 0; display: flex; flex-direction: column; margin: 0 5px; border-radius: 12px; overflow: hidden; background: #fff; box-shadow: 0 0 3px rgba(0, 0, 0, .35); }
.topbar { flex: none; display: flex; align-items: center; height: 50px; background: #0078d4; color: #fff; }
.burger { width: 58px; }
.brand { width: 500px; padding-left: 27px; font-size: 18px; }
.search { flex: 1; display: flex; align-items: center; gap: 9px; height: 32px; margin-left: 27px; padding: 0 10px; background: #b3d6f2; color: #1d5c99; border-radius: 2px; }
.search input { flex: 1; }
.search input::placeholder { color: #1d5c99; opacity: 1; }
.copilot { display: flex; align-items: center; gap: 6px; height: 32px; margin: 0 19px 0 20px; padding: 0 16px; background: #fff; border-radius: 4px; color: #243a5e; }
.top-icons { display: flex; align-self: stretch; }
.top-icons .icon-btn { width: 50px; }
.top-icons .on { background: #fff; color: #0b5cab; }
.account { display: flex; align-items: center; gap: 8px; width: 275px; padding: 0 8px 0 25px; text-align: left; }
.who { flex: 1; display: flex; flex-direction: column; padding-top: 2px; }
.mail { font: 17px/20px "Open Sans", sans-serif; }
.org { font-size: 12px; line-height: 16px; }

.split { flex: 1; min-height: 0; display: flex; }
.home { flex: 1; min-width: 0; display: flex; }
.content { flex: 1; min-width: 0; padding: 32px 83px 0 93px; }
h2 { font-size: 21px; line-height: 28px; }

.tiles { display: grid; grid-template-columns: repeat(8, 1fr); margin: 30px 0 0 -8px; row-gap: 23px; }
.tile { height: 102px; text-align: center; line-height: 21px; white-space: nowrap; }
.tile svg { margin: 0 auto 12px; }
.tile .arrow { width: 46px; height: 32px; margin-top: 6px; margin-bottom: 14px; }
.link, .res, .see-all, .panel-links, .note a { color: #0078d4; }
.last { grid-column: 8; }

.resources { margin: 56px 10px 0 0; }
.tabs { display: flex; gap: 30px; margin: 28px 0 0 10px; }
.tabs button { height: 37px; padding-bottom: 4px; border-bottom: 3px solid transparent; font-size: 16px; }
.tabs [aria-selected="true"] { border-color: #0078d4; }
table { width: calc(100% - 10px); margin: 14px 0 0 10px; border-collapse: collapse; table-layout: fixed; }
th, td { height: 41px; padding: 2px 0 0; border-bottom: 1px solid #d2d2d2; text-align: left; }
th { padding-top: 4px; }
.c-name { width: 498px; }
.c-type { width: 399px; }
.res { display: flex; align-items: center; gap: 9px; padding-top: 2px; }
.res svg { margin-bottom: 6px; }
.see-all { display: block; margin: 12px 0 0 10px; }

.navigate { margin-top: 69px; }
.nav-row { display: flex; margin: 42px 0 0; }
.nav-row a { display: flex; align-items: center; gap: 24px; width: 329px; }
.grid { padding: 1px; }

/* Scrollbars */
.scroll { flex: none; display: flex; flex-direction: column; align-items: center; width: 17px; background: #fbfbfb; }
.track { flex: 1; width: 11px; margin: 6px 0 9px; }
.thumb { border-radius: 6px; background: #8b8b8b; }
.home-scroll { padding: 9px 0 8px; }
.home-scroll .thumb { height: 52%; }
.panel-scroll { padding: 8px 0; }
.panel-scroll .thumb { height: 87%; }

/* Notifications */
.panel { flex: none; display: flex; flex-direction: column; width: 601px; border-left: 1px solid #e2e2e2; padding: 0 1px 0 25px; }
.panel-head { display: flex; justify-content: space-between; align-items: center; padding: 8px 36px 0 0; }
.panel-head .icon-btn { padding-top: 4px; }
h1 { font-size: 28px; line-height: 40px; }
.panel-links { display: flex; justify-content: space-between; margin: 53px 36px 17px 0; }
.panel-links a, .dismiss { display: flex; align-items: center; gap: 3px; }
.dismiss { gap: 13px; }
.panel-body { flex: 1; min-height: 0; display: flex; justify-content: space-between; }
.notes { flex: 1; margin-right: 26px; border-top: 1px solid #d2d2d2; }
.note { padding: 13px 6px 15px 13px; border-bottom: 1px solid #d2d2d2; color: #605e5c; }
.note-head { display: flex; align-items: center; gap: 9px; height: 24px; }
.note-head .icon-btn { margin: 0 5px 0 auto; }
h3 { font-size: 16px; line-height: 24px; color: #292827; }
.note p { margin-top: 9px; line-height: 22px; white-space: nowrap; }
.actions { display: flex; gap: 6px; margin-top: 19px; }
.actions button { display: flex; align-items: center; gap: 8px; height: 30px; padding: 0 26px; border-radius: 2px; background: #0078d4; color: #fff; }
.note time { display: block; margin-top: 15px; text-align: right; }

/* Taskbar */
.taskbar { flex: none; display: flex; height: 50px; background: linear-gradient(90deg, #d9e2c4 0, #dcdfcb 20%, #d6e2bd 26%, #dbdcc9 34%, #d5dfc2 42%, #d7e3b8 49%, #dfe2cb 54%, #ebebea 60%, #ededed 82%, #dbe4bb 88%, #d7e2b4 100%); color: #111; }
.start { width: 60px; }
.win-search { flex: none; display: flex; align-items: center; gap: 13px; width: 360px; padding: 0 15px 0 13px; background: #fff; border: 1px solid #c4c6c0; }
.win-search input { flex: 1; font: 18px/24px "Open Sans", sans-serif; }
.win-search input::placeholder { color: #333; opacity: 1; }
.bagel { width: 68px; height: 46px; }
.apps { flex: none; display: grid; grid-template-columns: repeat(11, 1fr); width: 684px; }
.running { margin: 0 6px; border-bottom: 3px solid #0078d4; padding-top: 3px; }
.focused { background: #f0f2e2; border-bottom: 3px solid #0078d4; padding-top: 3px; }
.amazon-a { font: 700 11px "Open Sans", sans-serif; fill: #222; }
.badge { font: 13px "Open Sans", sans-serif; fill: #111; }
.tray { display: flex; align-items: center; margin-left: auto; padding-right: 11px; }
.tray .icon-btn { width: 30px; }
.tray .tray-help { margin-right: 46px; }
.weather { display: flex; align-items: center; gap: 10px; margin-right: 24px; font-size: 17px; }
.clock { display: flex; flex-direction: column; align-items: center; width: 84px; font-size: 14px; line-height: 23px; }
.tray .action { width: 54px; }
```
